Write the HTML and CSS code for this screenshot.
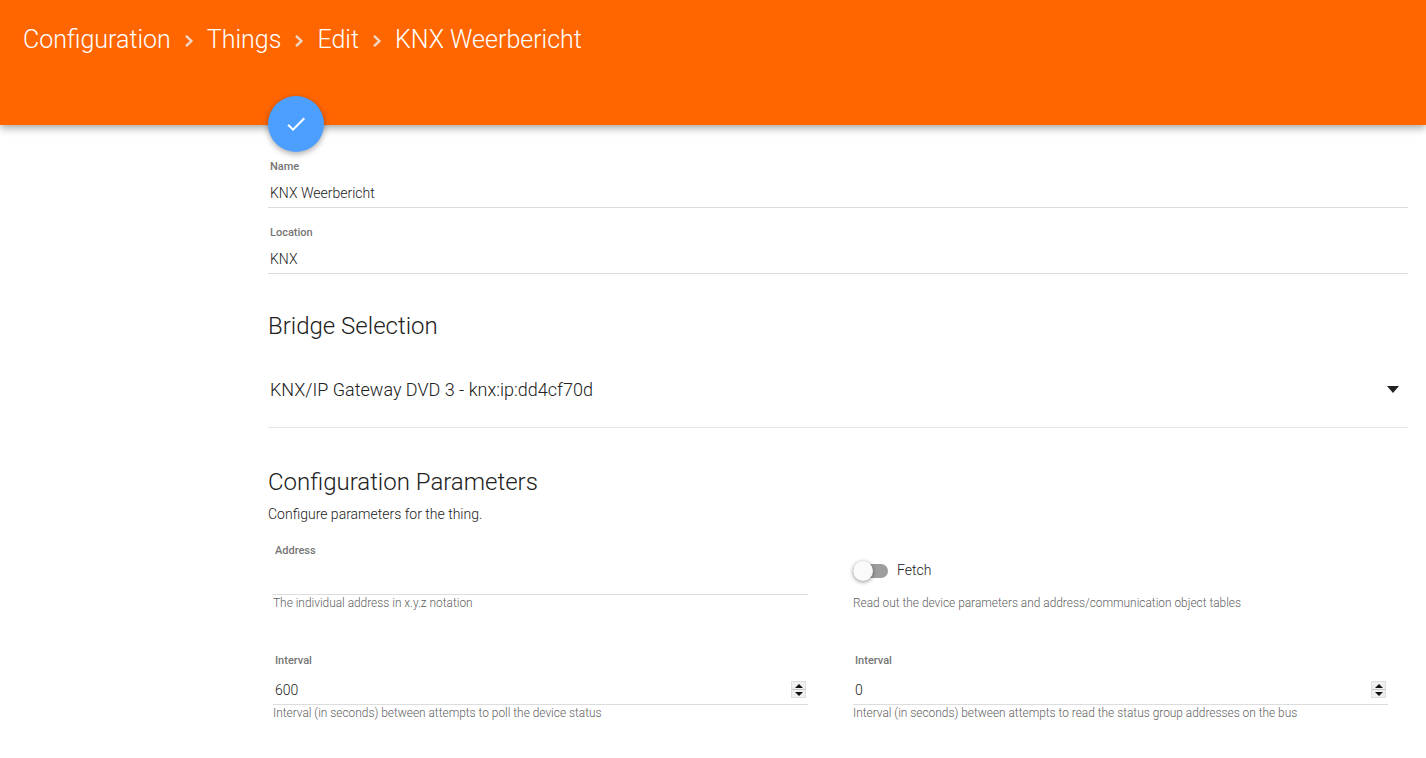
FILE: index.html
```html
<!DOCTYPE html>
<html>
<head>
    <title>KNX Weerbericht</title>
    <link rel="stylesheet" href="styles.css">
</head>
<body>
    <header class="toolbar">
        <span class="crumb">Configuration</span>
        <svg class="crumb-sep" viewBox="0 0 10 12"><path d="M2 .8 7.4 6 2 11.2" /></svg>
        <span class="crumb">Things</span>
        <svg class="crumb-sep" viewBox="0 0 10 12"><path d="M2 .8 7.4 6 2 11.2" /></svg>
        <span class="crumb">Edit</span>
        <svg class="crumb-sep" viewBox="0 0 10 12"><path d="M2 .8 7.4 6 2 11.2" /></svg>
        <span class="crumb">KNX Weerbericht</span>
    </header>

    <main class="content">
        <button class="fab">
            <svg viewBox="0 0 24 24"><path d="M9 16.17 4.83 12l-1.42 1.41L9 19 21 7l-1.41-1.41z" /></svg>
        </button>

        <div class="field field-name">
            <label class="field-label">Name</label>
            <div class="field-value">KNX Weerbericht</div>
        </div>
        <div class="field field-location">
            <label class="field-label">Location</label>
            <div class="field-value">KNX</div>
        </div>

        <h2 class="section-title bridge-title">Bridge Selection</h2>
        <div class="select">
            <span>KNX/IP Gateway DVD 3 - knx:ip:dd4cf70d</span>
            <span class="select-arrow"></span>
        </div>

        <h2 class="section-title config-title">Configuration Parameters</h2>
        <p class="section-desc">Configure parameters for the thing.</p>

        <div class="params">
            <div class="param">
                <label class="param-label">Address</label>
                <div class="param-input"></div>
                <div class="param-hint">The individual address in x.y.z notation</div>
            </div>
            <div class="param">
                <div class="toggle-row">
                    <span class="toggle"><span class="toggle-knob"></span></span>
                    <span class="toggle-text">Fetch</span>
                </div>
                <div class="param-hint">Read out the device parameters and address/communication object tables</div>
            </div>
            <div class="param">
                <label class="param-label">Interval</label>
                <div class="param-input">
                    <span>600</span>
                    <span class="spinner"><i class="spin-up"></i><i class="spin-down"></i></span>
                </div>
                <div class="param-hint">Interval (in seconds) between attempts to poll the device status</div>
            </div>
            <div class="param">
                <label class="param-label">Interval</label>
                <div class="param-input">
                    <span>0</span>
                    <span class="spinner"><i class="spin-up"></i><i class="spin-down"></i></span>
                </div>
                <div class="param-hint">Interval (in seconds) between attempts to read the status group addresses on the bus</div>
            </div>
        </div>
    </main>
</body>
</html>
```

FILE: styles.css
```css
html, body {
    margin: 0;
    height: 100%;
    overflow: hidden;
}
body {
    font-family: Roboto, sans-serif;
    color: #212121;
    background: #fff;
}
.toolbar {
    height: 125px;
    box-sizing: border-box;
    padding: 24px 0 0 23px;
    display: flex;
    align-items: flex-start;
    background: #ff6600;
    box-shadow: 0 3px 8px rgba(0, 0, 0, 0.35);
    position: relative;
}
.crumb {
    font-size: 25px;
    line-height: 32px;
    font-weight: 300;
    color: #fff;
}
.crumb-sep {
    width: 10px;
    height: 12px;
    margin: 11px 13px 0 13px;
    fill: none;
    stroke: #ecd8c8;
    stroke-width: 2.4;
}
.content {
    padding: 0 18px 0 268px;
}
.fab {
    display: flex;
    align-items: center;
    justify-content: center;
    width: 56px;
    height: 56px;
    margin-top: -29px;
    padding: 0;
    border: none;
    border-radius: 50%;
    background: #4d9fff;
    box-shadow: 0 2px 6px rgba(0, 0, 0, 0.35);
    position: relative;
}
.fab svg {
    width: 24px;
    height: 24px;
    fill: #fff;
}
.field {
    height: 50px;
    box-sizing: border-box;
    padding-top: 1px;
    border-bottom: 1px solid #ddd;
}
.field-name {
    margin-top: 6px;
}
.field-location {
    margin-top: 16px;
}
.field-label {
    display: block;
    padding-left: 2px;
    font-size: 11px;
    line-height: 16px;
    font-weight: 500;
    color: #757575;
}
.field-value {
    padding-left: 2px;
    margin-top: 8px;
    font-size: 14px;
    line-height: 20px;
    font-weight: 300;
}
.section-title {
    margin: 0;
    font-size: 24px;
    line-height: 32px;
    font-weight: 300;
}
.bridge-title {
    margin-top: 36px;
}
.select {
    height: 86px;
    box-sizing: border-box;
    padding: 26px 9px 16px 2px;
    display: flex;
    justify-content: space-between;
    align-items: center;
    border-bottom: 1px solid #e4e4e4;
    font-size: 18px;
    font-weight: 300;
}
.select-arrow {
    width: 0;
    height: 0;
    border-left: 6px solid transparent;
    border-right: 6px solid transparent;
    border-top: 7px solid #212121;
}
.config-title {
    margin-top: 38px;
}
.section-desc {
    margin: 7px 0 0;
    font-size: 14px;
    line-height: 18px;
    font-weight: 300;
}
.params {
    display: grid;
    grid-template-columns: 535px 535px;
    column-gap: 45px;
    margin: 20px 0 0 5px;
}
.param {
    height: 110px;
}
.param-label {
    display: block;
    padding-left: 2px;
    font-size: 11px;
    line-height: 16px;
    font-weight: 500;
    color: #757575;
}
.param-input {
    height: 36px;
    box-sizing: border-box;
    padding: 11px 2px 0 2px;
    display: flex;
    justify-content: space-between;
    align-items: flex-start;
    border-bottom: 1px solid #ddd;
    font-size: 14px;
    line-height: 20px;
    font-weight: 300;
}
.param-hint {
    font-size: 11.9px;
    line-height: 16px;
    font-weight: 300;
    color: #616161;
}
.spinner {
    width: 15px;
    height: 17px;
    margin-top: 1px;
    display: flex;
    flex-direction: column;
    box-sizing: border-box;
    background: #f0f0f0;
    border: 1px solid #dedede;
}
.spinner i {
    flex: 1;
    display: flex;
    align-items: center;
    justify-content: center;
}
.spinner i::before {
    content: "";
    width: 0;
    height: 0;
    border-left: 4px solid transparent;
    border-right: 4px solid transparent;
}
.spin-up {
    border-bottom: 1px solid #c4c4c4;
}
.spin-up::before {
    border-bottom: 4px solid #111;
}
.spin-down::before {
    border-top: 4px solid #111;
}
.toggle-row {
    height: 52px;
    box-sizing: border-box;
    padding-top: 2px;
    display: flex;
    align-items: center;
}
.toggle {
    width: 35px;
    height: 14px;
    margin-top: 1px;
    border-radius: 7px;
    background: #9e9e9e;
    display: flex;
    align-items: center;
}
.toggle-knob {
    width: 20px;
    height: 20px;
    border-radius: 50%;
    background: #fafafa;
    box-shadow: 0 1px 4px rgba(0, 0, 0, 0.45);
}
.toggle-text {
    margin-left: 9px;
    font-size: 14px;
    font-weight: 300;
}
```
